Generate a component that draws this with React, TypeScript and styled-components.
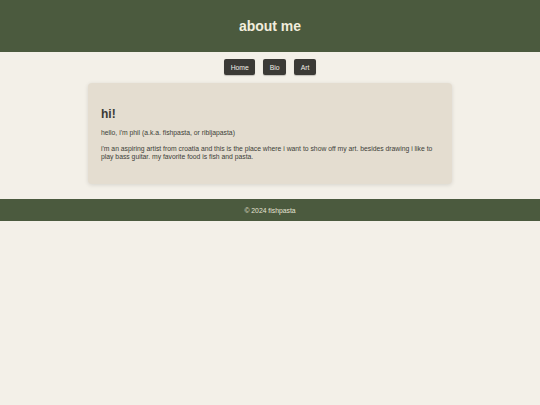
import React from "react";
import styled, { createGlobalStyle } from "styled-components";

const Global = createGlobalStyle`
  html, body { margin: 0; padding: 0; }
  body {
    background: #f3f0e8;
    font-family: "Liberation Sans", Arial, sans-serif;
    color: #3a3a36;
  }
`;

const Header = styled.header`
  background: #4b5a3e;
  height: 52px;
  display: flex;
  align-items: center;
  justify-content: center;
`;

const Title = styled.h1`
  margin: 0;
  font-size: 14px;
  font-weight: bold;
  color: #f1eddc;
`;

const Nav = styled.nav`
  display: flex;
  justify-content: center;
  gap: 8px;
  padding: 7px 0 8px;
`;

const NavButton = styled.a`
  display: flex;
  align-items: center;
  height: 16px;
  padding: 0 6.5px;
  background: #3b3a36;
  color: #f0eee6;
  font-size: 6.8px;
  border-radius: 2px;
  box-shadow: 0 1px 1px rgba(0, 0, 0, 0.2);
  text-decoration: none;
`;

const Card = styled.main`
  width: 364px;
  box-sizing: border-box;
  margin: 0 auto;
  padding: 18px 13px 23px;
  background: #e4ddd0;
  border-radius: 4px;
  box-shadow: 0 1px 4px rgba(0, 0, 0, 0.12);
`;

const Heading = styled.h2`
  margin: 6px 0 8px;
  font-size: 12px;
  line-height: 14px;
  font-weight: bold;
  color: #3a3a36;
`;

const Para = styled.p`
  margin: 0 0 8px;
  font-size: 6.8px;
  line-height: 8px;
  color: #3d3d38;
  &:last-child { margin-bottom: 0; }
`;

const Footer = styled.footer`
  margin-top: 15px;
  height: 22px;
  background: #4b5a3e;
  display: flex;
  align-items: center;
  justify-content: center;
  color: #e6e3d4;
  font-size: 6.8px;
`;

export default function App() {
  return (
    <>
      <Global />
      <Header>
        <Title>about me</Title>
      </Header>
      <Nav>
        <NavButton>Home</NavButton>
        <NavButton>Bio</NavButton>
        <NavButton>Art</NavButton>
      </Nav>
      <Card>
        <Heading>hi!</Heading>
        <Para>hello, i'm phil (a.k.a. fishpasta, or ribljapasta)</Para>
        <Para>
          i'm an aspiring artist from croatia and this is the place where i want to show off my art. besides drawing i like to play bass guitar. my favorite food is fish and pasta.
        </Para>
      </Card>
      <Footer>© 2024 fishpasta</Footer>
    </>
  );
}
